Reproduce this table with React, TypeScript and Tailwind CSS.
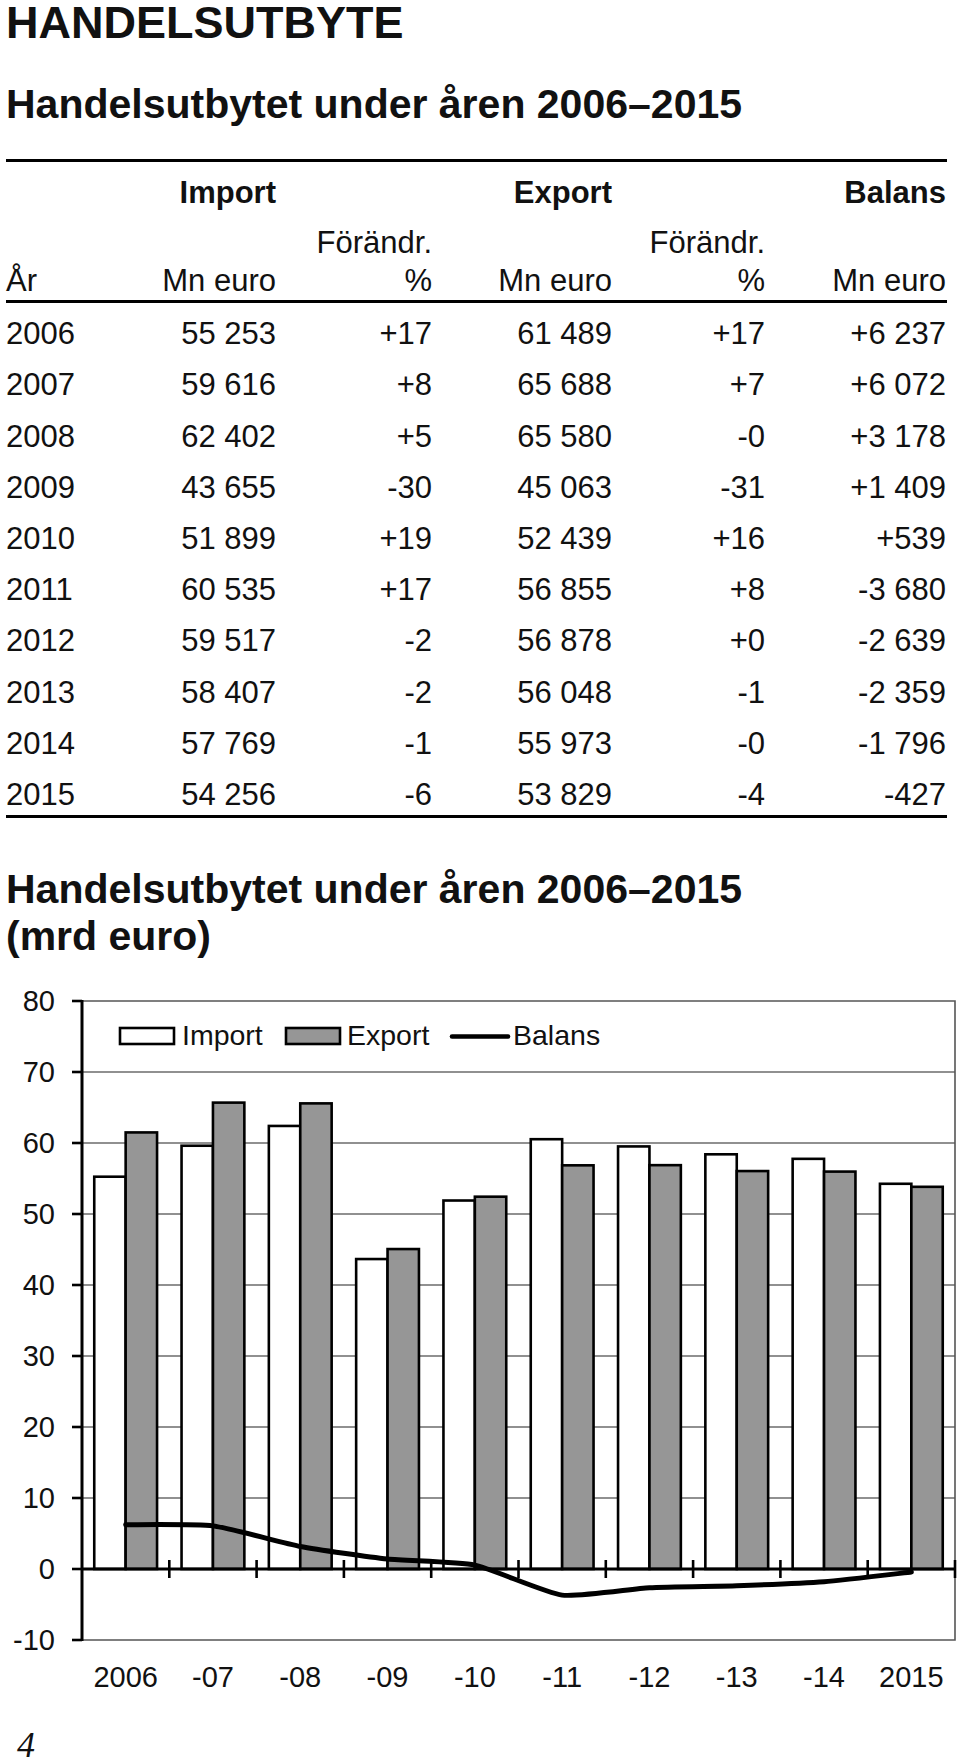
const rows = [
  ['2006', '55 253', '+17', '61 489', '+17', '+6 237'],
  ['2007', '59 616', '+8', '65 688', '+7', '+6 072'],
  ['2008', '62 402', '+5', '65 580', '-0', '+3 178'],
  ['2009', '43 655', '-30', '45 063', '-31', '+1 409'],
  ['2010', '51 899', '+19', '52 439', '+16', '+539'],
  ['2011', '60 535', '+17', '56 855', '+8', '-3 680'],
  ['2012', '59 517', '-2', '56 878', '+0', '-2 639'],
  ['2013', '58 407', '-2', '56 048', '-1', '-2 359'],
  ['2014', '57 769', '-1', '55 973', '-0', '-1 796'],
  ['2015', '54 256', '-6', '53 829', '-4', '-427'],
];

const imports = [55.253, 59.616, 62.402, 43.655, 51.899, 60.535, 59.517, 58.407, 57.769, 54.256];
const exports = [61.489, 65.688, 65.58, 45.063, 52.439, 56.855, 56.878, 56.048, 55.973, 53.829];
const balans = [6.237, 6.072, 3.178, 1.409, 0.539, -3.68, -2.639, -2.359, -1.796, -0.427];
const xLabels = ['2006', '-07', '-08', '-09', '-10', '-11', '-12', '-13', '-14', '2015'];

// chart geometry, in page pixels
const X0 = 82;
const X1 = 955;
const Y0 = 1569;
const K = 7.1;
const CW = 87.3;
const BW = 31.4;
const yv = (v: number) => Y0 - v * K;
const cx = (i: number) => X0 + CW * (i + 0.5);

// lightly smoothed line through the points
function smoothPath(pts: [number, number][]) {
  const t = 11;
  let d = `M${pts[0][0]} ${pts[0][1]}`;
  for (let i = 0; i < pts.length - 1; i++) {
    const p0 = pts[i - 1] ?? pts[i];
    const p1 = pts[i];
    const p2 = pts[i + 1];
    const p3 = pts[i + 2] ?? pts[i + 1];
    const c1x = p1[0] + (p2[0] - p0[0]) / t;
    const c1y = p1[1] + (p2[1] - p0[1]) / t;
    const c2x = p2[0] - (p3[0] - p1[0]) / t;
    const c2y = p2[1] - (p3[1] - p1[1]) / t;
    d += ` C${c1x} ${c1y} ${c2x} ${c2y} ${p2[0]} ${p2[1]}`;
  }
  return d;
}

function Chart() {
  const font = "'Liberation Sans', Arial, sans-serif";
  const line = smoothPath(balans.map((b, i) => [cx(i), yv(b)]));
  return (
    <svg width={960} height={767} viewBox="0 960 960 767" className="block">
      {/* gridlines */}
      {[70, 60, 50, 40, 30, 20, 10].map((v) => (
        <line key={v} x1={X0} x2={X1} y1={yv(v)} y2={yv(v)} stroke="#222" strokeWidth={1.1} />
      ))}
      <path d={`M${X0} ${yv(80)} H${X1} V${yv(-10)} H${X0}`} fill="none" stroke="#555" strokeWidth={1.6} />

      {/* bars */}
      {imports.map((v, i) => (
        <g key={i}>
          <rect x={cx(i) - BW} y={yv(v)} width={BW} height={Y0 - yv(v)} fill="#fff" stroke="#000" strokeWidth={2.6} />
          <rect x={cx(i)} y={yv(exports[i])} width={BW} height={Y0 - yv(exports[i])} fill="#969696" stroke="#000" strokeWidth={2.6} />
        </g>
      ))}

      {/* axes */}
      <line x1={X0} x2={X1} y1={Y0} y2={Y0} stroke="#000" strokeWidth={3} />
      {Array.from({ length: 10 }, (_, k) => (
        <line key={k} x1={X0 + CW * (k + 1)} x2={X0 + CW * (k + 1)} y1={Y0 - 9} y2={Y0 + 9} stroke="#000" strokeWidth={2.6} />
      ))}
      <line x1={X0} x2={X0} y1={yv(80) - 1} y2={yv(-10) + 1} stroke="#000" strokeWidth={3} />
      {[80, 70, 60, 50, 40, 30, 20, 10, 0, -10].map((v) => (
        <g key={v}>
          <line x1={72} x2={X0} y1={yv(v)} y2={yv(v)} stroke="#000" strokeWidth={2.6} />
          <text x={55} y={yv(v) + 10.4} textAnchor="end" fontFamily={font} fontSize={29} fill="#111">
            {v}
          </text>
        </g>
      ))}
      {xLabels.map((l, i) => (
        <text key={l} x={cx(i)} y={1686.5} textAnchor="middle" fontFamily={font} fontSize={29} fill="#111">
          {l}
        </text>
      ))}

      {/* balans */}
      <path d={line} fill="none" stroke="#000" strokeWidth={5} strokeLinejoin="round" strokeLinecap="round" />

      {/* legend */}
      <rect x={120} y={1028} width={54} height={16} fill="#fff" stroke="#000" strokeWidth={2.6} />
      <text x={182} y={1045} fontFamily={font} fontSize={28.5} fill="#111">Import</text>
      <rect x={286} y={1028} width={54} height={16} fill="#969696" stroke="#000" strokeWidth={2.6} />
      <text x={347} y={1045} fontFamily={font} fontSize={28.5} fill="#111">Export</text>
      <line x1={452} x2={508} y1={1036.5} y2={1036.5} stroke="#000" strokeWidth={4.6} strokeLinecap="round" />
      <text x={513} y={1045} fontFamily={font} fontSize={28.5} fill="#111">Balans</text>
    </svg>
  );
}

export default function App() {
  return (
    <div className="w-[960px] bg-white text-[#111] font-['Liberation_Sans',Arial,sans-serif]">
      <div className="px-[6px]">
        <h1 className="text-[45px] leading-[46px] font-bold">HANDELSUTBYTE</h1>
        <h2 className="mt-[34px] text-[41px] leading-[48px] font-bold">Handelsutbytet under åren 2006–2015</h2>

        {/* Table */}
        <div className="mt-[31px] h-[3px] w-[941px] bg-black" />
        <div className="mt-[13px] grid grid-cols-[120px_150px_156px_180px_153px_181px] text-[31px] leading-[36px] font-bold">
          <div />
          <div className="text-right">Import</div>
          <div />
          <div className="text-right">Export</div>
          <div />
          <div className="text-right">Balans</div>
        </div>
        <div className="mt-[13px] grid grid-cols-[120px_150px_156px_180px_153px_181px] items-end text-[31px] leading-[38px]">
          <div>År</div>
          <div className="text-right">Mn euro</div>
          <div className="text-right">
            Förändr.
            <br />%
          </div>
          <div className="text-right">Mn euro</div>
          <div className="text-right">
            Förändr.
            <br />%
          </div>
          <div className="text-right">Mn euro</div>
        </div>
        <div className="h-[3px] w-[941px] bg-black" />
        {rows.map((r) => (
          <div
            key={r[0]}
            className="grid h-[51.2px] grid-cols-[120px_150px_156px_180px_153px_181px] items-end pb-[5px] text-[31px] leading-none"
          >
            <div>{r[0]}</div>
            <div className="text-right">{r[1]}</div>
            <div className="text-right">{r[2]}</div>
            <div className="text-right">{r[3]}</div>
            <div className="text-right">{r[4]}</div>
            <div className="text-right">{r[5]}</div>
          </div>
        ))}
        <div className="h-[3px] w-[941px] bg-black" />

        {/* Chart title */}
        <h2 className="mt-[48px] text-[41px] leading-[47px] font-bold">
          Handelsutbytet under åren 2006–2015
          <br />
          (mrd euro)
        </h2>
      </div>

      <Chart />

      <div className="h-[36px] pl-[17px] font-['Liberation_Serif',serif] text-[36px] leading-[36px] italic">4</div>
    </div>
  );
}
